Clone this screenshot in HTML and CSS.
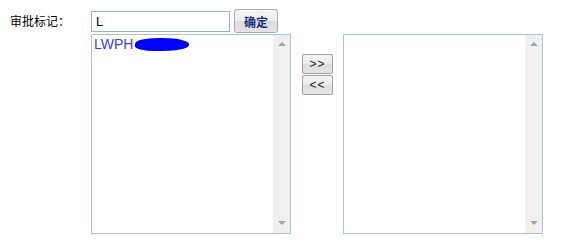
FILE: index.html
```html
<!DOCTYPE html>
<html lang="zh-CN">
<head>
<meta charset="utf-8">
<title>审批标记</title>
<link rel="stylesheet" href="styles.css">
</head>
<body>
<div class="form">
  <div class="label">审批标记：</div>
  <div class="fields">
    <div class="search-row">
      <div class="input">L</div>
      <button class="btn-ok">确定</button>
    </div>
    <div class="lists">
      <div class="listbox">
        <div class="options">
          <div class="option">LWPH<span class="redact"></span></div>
        </div>
        <div class="scroll">
          <span class="arrow up"></span>
          <span class="arrow down"></span>
        </div>
      </div>
      <div class="movers">
        <button class="mv">&gt;&gt;</button>
        <button class="mv">&lt;&lt;</button>
      </div>
      <div class="listbox">
        <div class="options"></div>
        <div class="scroll">
          <span class="arrow up"></span>
          <span class="arrow down"></span>
        </div>
      </div>
    </div>
  </div>
</div>
</body>
</html>
```

FILE: styles.css
```css
html, body {
  margin: 0;
  padding: 0;
  background: #ffffff;
}
body {
  font-family: "Noto Sans CJK SC", "Liberation Sans", sans-serif;
  font-size: 12px;
  color: #000;
}
.form {
  display: flex;
  padding-top: 9px;
}
.label {
  width: 81px;
  padding-left: 10px;
  height: 24px;
  line-height: 24px;
  font-size: 12px;
}
.fields {
  display: flex;
  flex-direction: column;
}
.search-row {
  display: flex;
  align-items: center;
  gap: 4px;
  height: 24px;
}
.input {
  box-sizing: border-box;
  width: 139px;
  height: 21px;
  border: 1px solid #8cb4d4;
  padding-left: 4px;
  font-family: "Liberation Sans", sans-serif;
  font-size: 13px;
  line-height: 19px;
}
.btn-ok {
  box-sizing: border-box;
  width: 44px;
  height: 24px;
  margin: 0;
  padding: 0;
  border: 1px solid #a8a8a8;
  border-radius: 3px;
  background: linear-gradient(#f6f6f6 0%, #ececec 50%, #dcdcdc 51%, #e4e4e4 100%);
  font-family: "Noto Sans CJK SC", sans-serif;
  font-weight: bold;
  font-size: 12px;
  color: #1d2f80;
}
.lists {
  display: flex;
  align-items: flex-start;
  margin-top: 1px;
}
.listbox {
  box-sizing: border-box;
  width: 200px;
  height: 200px;
  border: 1px solid #a9c7d2;
  display: flex;
}
.options {
  flex: 1;
  padding-top: 1px;
}
.option {
  font-family: "Liberation Sans", sans-serif;
  font-size: 14px;
  line-height: 16px;
  color: #3a3aff;
  padding-left: 2px;
  display: flex;
  align-items: center;
}
.redact {
  display: inline-block;
  width: 54px;
  height: 13px;
  margin-left: 2px;
  background: #0000ff;
  border-radius: 40% 50% 45% 40%;
  transform: skewX(-10deg);
}
.scroll {
  width: 17px;
  background: #f0f0f0;
  display: flex;
  flex-direction: column;
  justify-content: space-between;
  align-items: center;
  padding: 7px 0 8px;
}
.arrow {
  width: 0;
  height: 0;
  border-left: 4px solid transparent;
  border-right: 4px solid transparent;
}
.arrow.up {
  border-bottom: 4px solid #a3a3a3;
}
.arrow.down {
  border-top: 4px solid #a3a3a3;
}
.movers {
  display: flex;
  flex-direction: column;
  gap: 1px;
  margin: 20px 10px 0 11px;
}
.mv {
  box-sizing: border-box;
  width: 31px;
  height: 20px;
  margin: 0;
  padding: 0;
  border: 1px solid #a0a0a0;
  border-radius: 2px;
  background: linear-gradient(#f5f5f5 0%, #ebebeb 50%, #dddddd 51%, #e5e5e5 100%);
  font-family: "Liberation Sans", sans-serif;
  font-size: 12px;
  color: #222;
  letter-spacing: 1px;
}
```
